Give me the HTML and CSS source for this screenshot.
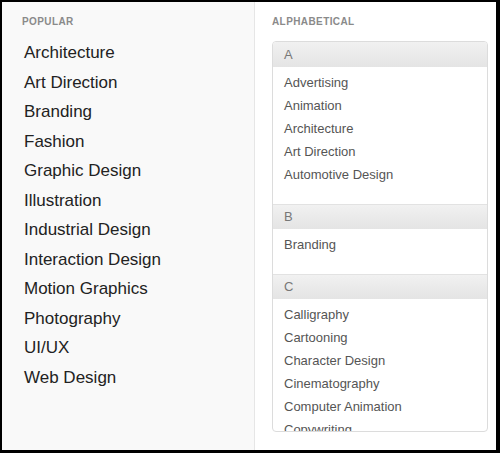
FILE: index.html
```html
<!DOCTYPE html>
<html>
<head>
<meta charset="utf-8">
<link rel="stylesheet" href="styles.css">
</head>
<body>
<div class="frame">
  <div class="popular">
    <div class="label">POPULAR</div>
    <ul class="pop-list">
      <li>Architecture</li>
      <li>Art Direction</li>
      <li>Branding</li>
      <li>Fashion</li>
      <li>Graphic Design</li>
      <li>Illustration</li>
      <li>Industrial Design</li>
      <li>Interaction Design</li>
      <li>Motion Graphics</li>
      <li>Photography</li>
      <li>UI/UX</li>
      <li>Web Design</li>
    </ul>
  </div>
  <div class="alpha">
    <div class="label">ALPHABETICAL</div>
    <div class="card">
      <div class="sec-head first">A</div>
      <ul class="sec-list">
        <li>Advertising</li>
        <li>Animation</li>
        <li>Architecture</li>
        <li>Art Direction</li>
        <li>Automotive Design</li>
      </ul>
      <div class="sec-head">B</div>
      <ul class="sec-list">
        <li>Branding</li>
      </ul>
      <div class="sec-head">C</div>
      <ul class="sec-list">
        <li>Calligraphy</li>
        <li>Cartooning</li>
        <li>Character Design</li>
        <li>Cinematography</li>
        <li>Computer Animation</li>
        <li>Copywriting</li>
      </ul>
    </div>
  </div>
</div>
</body>
</html>
```

FILE: styles.css
```css
html, body {
  margin: 0;
  padding: 0;
  background: #000;
}
body {
  font-family: "Liberation Sans", Arial, Helvetica, sans-serif;
}
.frame {
  width: 500px;
  height: 453px;
  box-sizing: border-box;
  border-style: solid;
  border-color: #000;
  border-width: 2px 4px 3px 2px;
  display: flex;
  background: #fff;
}
.popular {
  background: #f9f9f9;
  border-right: 1px solid #e6e6e6;
  padding: 14px 0 0 20px;
  box-sizing: border-box;
  flex: 0 0 253px;
}
.label {
  font-size: 10px;
  line-height: 12px;
  font-weight: bold;
  letter-spacing: 0.4px;
  color: #8a8a8a;
}
.pop-list {
  list-style: none;
  margin: 10px 0 0 2px;
  padding: 0;
}
.pop-list li {
  font-size: 17px;
  line-height: 29.5px;
  color: #222;
}
.alpha {
  flex: 1;
  background: #fff;
  padding: 14px 8px 0 17px;
  display: flex;
  flex-direction: column;
}
.card {
  margin-top: 13px;
  height: 391px;
  box-sizing: border-box;
  border: 1px solid #dcdcdc;
  border-radius: 4px;
  overflow: hidden;
  background: #fff;
}
.sec-head {
  height: 24px;
  line-height: 24px;
  border-top: 1px solid #e2e2e2;
  background: linear-gradient(#f1f1f1, #e4e4e4);
  padding-left: 11px;
  font-size: 13px;
  color: #777;
}
.sec-head.first {
  border-top: none;
  height: 25px;
  line-height: 25px;
}
.sec-list {
  list-style: none;
  margin: 0;
  padding: 4px 0 18px 11px;
}
.sec-list li {
  font-size: 13px;
  line-height: 23px;
  color: #555;
}
```
